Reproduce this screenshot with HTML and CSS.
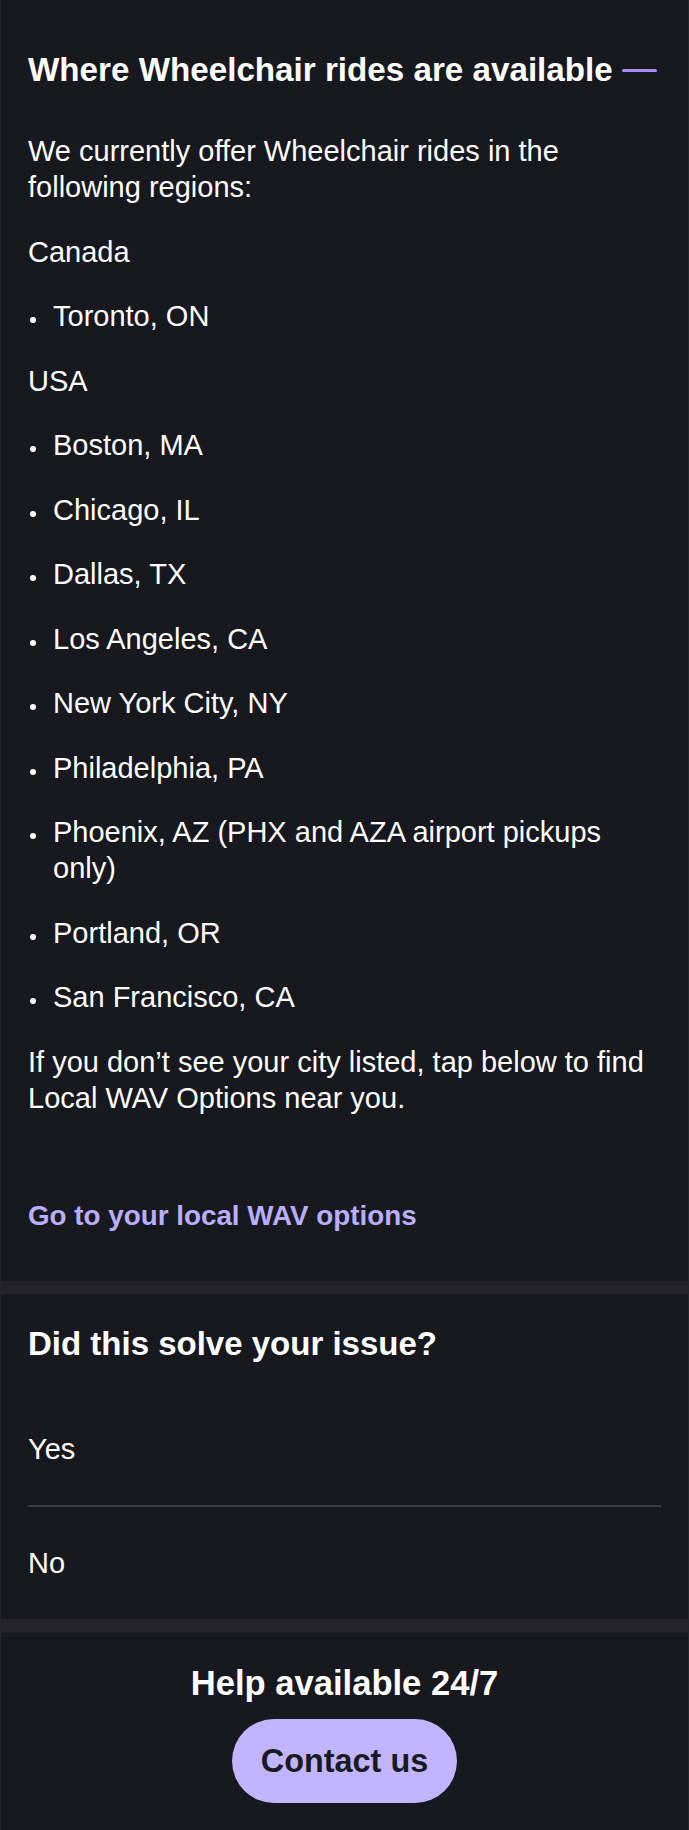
FILE: index.html
```html
<!DOCTYPE html>
<html lang="en">
<head>
<meta charset="utf-8">
<title>Where Wheelchair rides are available</title>
<link rel="stylesheet" href="styles.css">
</head>
<body>
<main class="page">
  <section class="article">
    <div class="article-head">
      <h2 class="title">Where Wheelchair rides are available</h2>
      <span class="collapse-dash" aria-hidden="true"></span>
    </div>
    <p class="text">We currently offer Wheelchair rides in the following regions:</p>
    <p class="text">Canada</p>
    <ul class="cities">
      <li>Toronto, ON</li>
    </ul>
    <p class="text">USA</p>
    <ul class="cities">
      <li>Boston, MA</li>
      <li>Chicago, IL</li>
      <li>Dallas, TX</li>
      <li>Los Angeles, CA</li>
      <li>New York City, NY</li>
      <li>Philadelphia, PA</li>
      <li>Phoenix, AZ (PHX and AZA airport pickups only)</li>
      <li>Portland, OR</li>
      <li>San Francisco, CA</li>
    </ul>
    <p class="text">If you don’t see your city listed, tap below to find Local WAV Options near you.</p>
    <a class="wav-link" href="#">Go to your local WAV options</a>
  </section>

  <div class="band band-top"></div>

  <section class="feedback">
    <h2 class="title">Did this solve your issue?</h2>
    <div class="choices">
      <div class="choice">Yes</div>
      <div class="choice">No</div>
    </div>
  </section>

  <div class="band band-bottom"></div>

  <section class="help">
    <h2 class="title help-title">Help available 24/7</h2>
    <a class="contact-btn" href="#">Contact us</a>
  </section>
</main>
</body>
</html>
```

FILE: styles.css
```css
* {
  box-sizing: border-box;
}

html, body {
  margin: 0;
  padding: 0;
  background: #18181f;
}

body {
  font-family: "Liberation Sans", Arial, sans-serif;
  color: #ffffff;
}

.page {
  width: 689px;
  min-height: 1830px;
  border-left: 1px solid #25252c;
  border-right: 1px solid #25252c;
  display: flex;
  flex-direction: column;
}

.title {
  margin: 0;
  font-size: 33px;
  line-height: 40px;
  font-weight: 700;
  color: #ffffff;
}

/* Article */
.article {
  padding: 50px 27px 47px 27px;
}

.article-head {
  display: flex;
  align-items: center;
  justify-content: space-between;
  gap: 6px;
  margin-bottom: 43px;
}

.article-head .title {
  font-size: 33.2px;
  white-space: nowrap;
}

.collapse-dash {
  display: block;
  width: 35px;
  height: 3px;
  border-radius: 2px;
  background: #a98af5;
  margin-right: 4px;
  flex: none;
}

.text {
  margin: 0 0 28.5px 0;
  font-size: 29px;
  line-height: 36px;
}

.cities {
  list-style: none;
  margin: 0 0 28.5px 0;
  padding: 0;
}

.cities li {
  position: relative;
  padding-left: 25px;
  font-size: 29px;
  line-height: 36px;
  margin-bottom: 28.5px;
}

.cities li:last-child {
  margin-bottom: 0;
}

.cities li::before {
  content: "";
  position: absolute;
  left: 2px;
  top: 19px;
  width: 6px;
  height: 6px;
  border-radius: 50%;
  background: #ffffff;
}

.wav-link {
  display: block;
  margin-top: 82px;
  font-size: 27.8px;
  line-height: 36px;
  font-weight: 700;
  color: #b9aeff;
  text-decoration: none;
}

/* Bands */
.band {
  background: #232329;
}

.band-top {
  height: 13px;
}

.band-bottom {
  height: 14px;
}

/* Feedback */
.feedback {
  padding: 30px 27px 0 27px;
}

.choices {
  margin-top: 29px;
  display: flex;
  flex-direction: column;
}

.choice {
  padding: 38px 0;
  font-size: 29px;
  line-height: 36px;
}

.choice + .choice {
  border-top: 2px solid #3c3c43;
}

/* Help */
.help {
  padding: 30px 27px 27px 27px;
  display: flex;
  flex-direction: column;
  align-items: center;
}

.help-title {
  font-size: 34.6px;
}

.contact-btn {
  margin-top: 16px;
  padding: 24px 29px;
  border-radius: 42px;
  background: #c1b5ff;
  color: #1a1a22;
  font-size: 32.4px;
  line-height: 36px;
  font-weight: 700;
  text-decoration: none;
}
```
